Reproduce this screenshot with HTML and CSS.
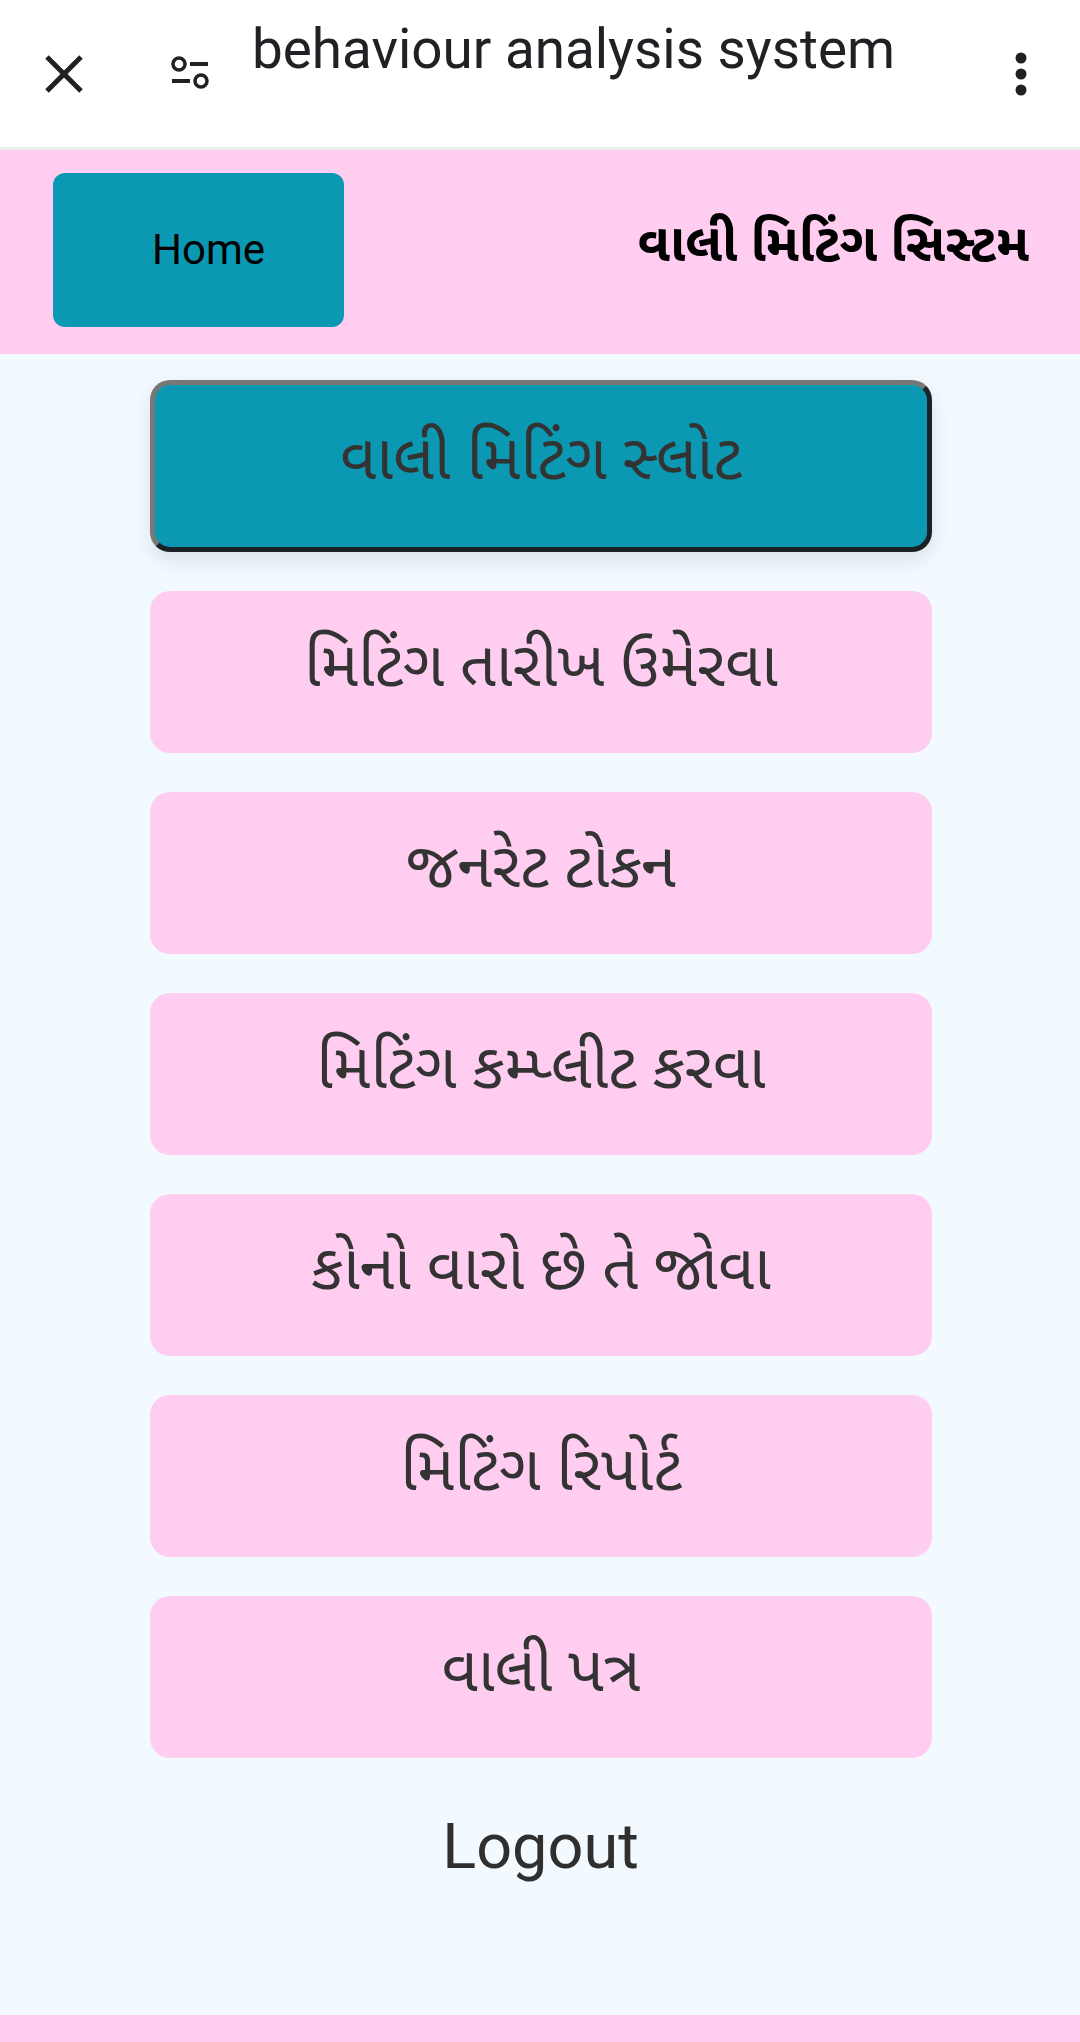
FILE: index.html
```html
<!DOCTYPE html>
<html lang="gu">
<head>
    <meta charset="UTF-8">
    <meta name="viewport" content="width=device-width, initial-scale=1.0">
    <title>behaviour analysis system</title>
    <link rel="stylesheet" href="styles.css">
</head>
<body>
<div class="topbar">
    <svg class="icon-close" viewBox="0 0 40 40" width="40" height="40">
        <path d="M3 3 L37 37 M37 3 L3 37" fill="none" stroke="#202124" stroke-width="5"/>
    </svg>
    <svg class="icon-tune" viewBox="0 0 40 36" width="40" height="36">
        <circle cx="9" cy="8" r="6" fill="none" stroke="#202124" stroke-width="3.5"/>
        <path d="M20 8 H38 M2 25 H20" fill="none" stroke="#202124" stroke-width="4"/>
        <circle cx="31" cy="25" r="6" fill="none" stroke="#202124" stroke-width="3.5"/>
    </svg>
    <div class="page-title">behaviour analysis system</div>
    <svg class="icon-more" viewBox="0 0 12 44" width="12" height="44">
        <circle cx="6" cy="6" r="5.5" fill="#202124"/>
        <circle cx="6" cy="22" r="5.5" fill="#202124"/>
        <circle cx="6" cy="38" r="5.5" fill="#202124"/>
    </svg>
</div>
<header class="header">
    <a class="home-btn">Home</a>
    <h1>વાલી મિટિંગ સિસ્ટમ</h1>
</header>
<main class="menu">
    <button class="menu-btn active">વાલી મિટિંગ સ્લોટ</button>
    <button class="menu-btn">મિટિંગ તારીખ ઉમેરવા</button>
    <button class="menu-btn">જનરેટ ટોકન</button>
    <button class="menu-btn">મિટિંગ કમ્પ્લીટ કરવા</button>
    <button class="menu-btn">કોનો વારો છે તે જોવા</button>
    <button class="menu-btn">મિટિંગ રિપોર્ટ</button>
    <button class="menu-btn">વાલી પત્ર</button>
    <a class="logout">Logout</a>
</main>
<footer class="footer"></footer>
</body>
</html>
```
FILE: styles.css
```css
html, body {
    height: 100%;
}
body {
    margin: 0;
    font-family: Roboto, "Noto Sans Gujarati", "Noto Sans", sans-serif;
    background-color: #f3faff;
    display: flex;
    flex-direction: column;
    overflow: hidden;
}
.topbar {
    height: 147px;
    flex: none;
    background-color: white;
    border-bottom: 3px solid #ececec;
    display: flex;
    align-items: center;
}
.icon-close {
    margin-left: 44px;
}
.icon-tune {
    margin-left: 86px;
}
.page-title {
    margin-left: 42px;
    align-self: flex-start;
    padding-top: 18px;
    font-size: 54.8px;
    line-height: 62px;
    color: #202124;
}
.icon-more {
    margin-left: auto;
    margin-right: 53px;
}
.header {
    height: 204px;
    flex: none;
    background-color: #ffcdf0;
    display: flex;
    align-items: center;
    justify-content: space-between;
    padding: 0 51px 4px 53px;
    box-sizing: border-box;
}
.header h1 {
    margin: 0 0 6px;
    font-size: 52.5px;
    font-weight: bold;
    color: black;
}
.home-btn {
    width: 192px;
    height: 154px;
    padding-left: 99px;
    line-height: 154px;
    font-size: 42px;
    color: black;
    background-color: #0b98b2;
    border-radius: 12px;
}
.menu {
    flex: 1;
    display: flex;
    flex-direction: column;
    align-items: center;
    padding-top: 26px;
}
.menu-btn {
    width: 782px;
    height: 162px;
    margin: 0 0 39px 2px;
    padding: 0 0 5px;
    border: none;
    border-radius: 20px;
    background-color: #ffcdf0;
    color: #333;
    font-family: inherit;
    font-size: 63px;
}
.menu-btn.active {
    height: 172px;
    padding-bottom: 6px;
    background-color: #0b98b2;
    border: 5px solid;
    border-color: #777 #1b2226 #1b2226 #777;
    box-shadow: 0 8px 20px rgba(0, 0, 0, 0.1);
}
.logout {
    margin-top: 13px;
    margin-left: 1px;
    font-size: 63px;
    color: #2f2f2f;
}
.footer {
    height: 27px;
    flex: none;
    background-color: #ffcdf0;
}
```
